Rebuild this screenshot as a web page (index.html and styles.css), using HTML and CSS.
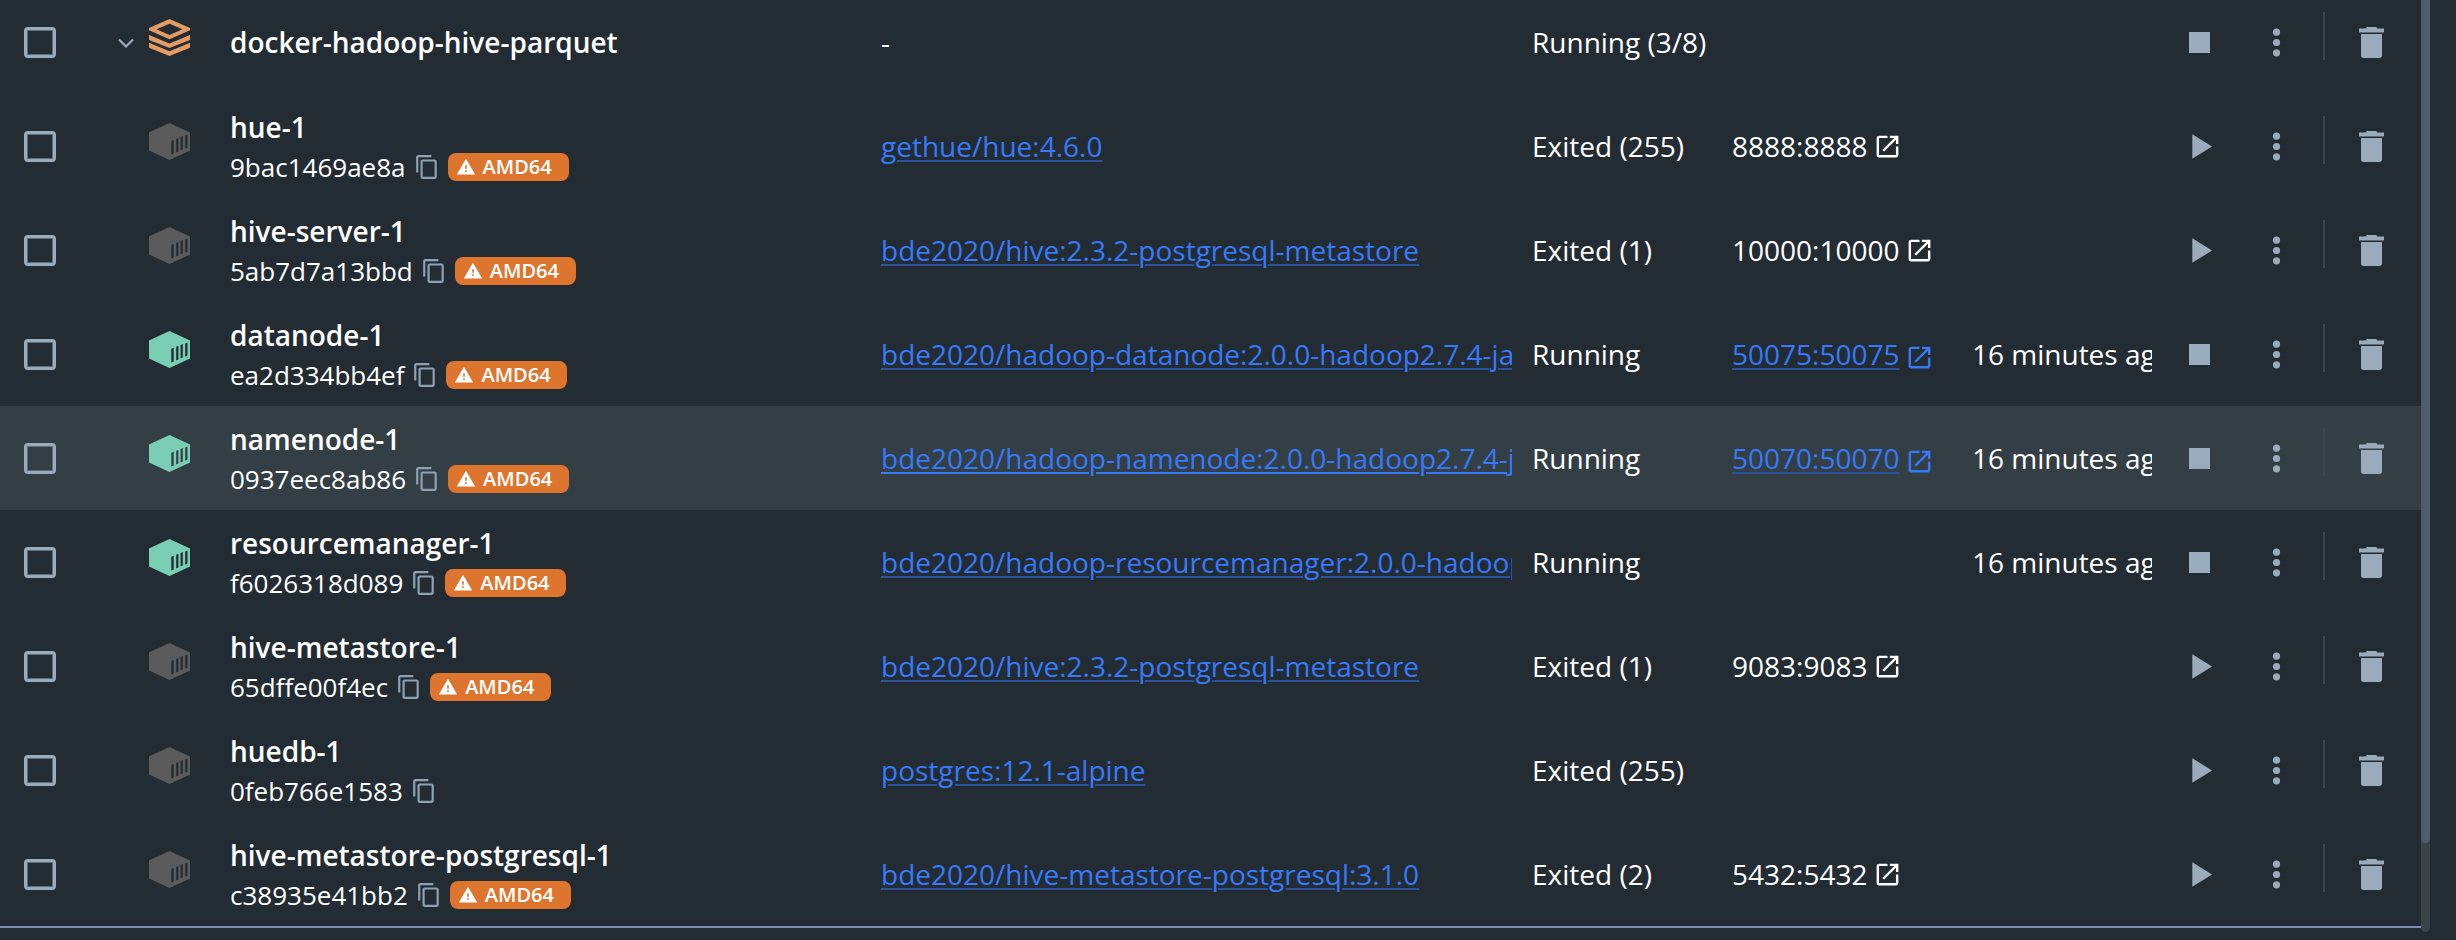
FILE: index.html
```html
<!DOCTYPE html>
<html lang="en">
<head>
<meta charset="utf-8">
<title>Containers</title>
<link rel="stylesheet" href="styles.css">
</head>
<body>
<svg class="defs" width="0" height="0" aria-hidden="true">
  <symbol id="i-chevron" viewBox="0 0 16 10"><path d="M1 1.500l7 7 7-7" fill="none" stroke="currentColor" stroke-width="2.200"/></symbol>
  <symbol id="i-stack" viewBox="0 0 41 37"><path fill="currentColor" fill-rule="evenodd" d="M20.500 0L41 9v2.300L20.500 20.300 0 11.300V9zM20.500 4.700L7.500 10.300l13 5.800 13-5.800zM0 16l20.500 8.500L41 16v5L20.500 29 0 21zM0 23.700l20.500 8.500L41 23.700v5L20.500 37 0 28.700z"/></symbol>
  <symbol id="i-box" viewBox="0 0 41 37"><path fill="currentColor" fill-rule="evenodd" d="M20.500 0L41 9.500v18L20.500 37 0 27.500v-18zM22.300 17.800v13.800l2.400-1V16.800zM27.200 15.800v13.600l2.200-1V14.900zM31.600 14v13.400l2.200-1V13zM36.200 12.400v13.400l2.300-1V11.500z"/></symbol>
  <symbol id="i-copy" viewBox="0 0 24 24"><path fill="currentColor" d="M16 1H4c-1.100 0-2 .9-2 2v14h2V3h12V1zm3 4H8c-1.100 0-2 .9-2 2v14c0 1.100.9 2 2 2h11c1.100 0 2-.9 2-2V7c0-1.100-.9-2-2-2zm0 16H8V7h11v14z"/></symbol>
  <symbol id="i-warn" viewBox="0 0 24 24"><path fill="currentColor" d="M1 21h22L12 2 1 21zm12-3h-2v-2h2v2zm0-4h-2v-4h2v4z"/></symbol>
  <symbol id="i-open" viewBox="0 0 24 24"><path fill="currentColor" d="M19 19H5V5h7V3H5c-1.110 0-2 .9-2 2v14c0 1.100.89 2 2 2h14c1.100 0 2-.9 2-2v-7h-2v7zM14 3v2h3.590l-9.830 9.830 1.410 1.410L19 6.410V10h2V3h-7z"/></symbol>
  <symbol id="i-stop" viewBox="0 0 32 32"><path fill="currentColor" d="M7 6h21v21H7z"/></symbol>
  <symbol id="i-play" viewBox="0 0 32 32"><path fill="currentColor" d="M10.300 4.200v24.600L30 16.500z"/></symbol>
  <symbol id="i-more" viewBox="0 0 32 32"><g fill="currentColor"><circle cx="16.500" cy="6.200" r="3.600"/><circle cx="16.500" cy="16.500" r="3.600"/><circle cx="16.500" cy="26.800" r="3.600"/></g></symbol>
  <symbol id="i-trash" viewBox="0 0 32 32"><path fill="currentColor" d="M3 2.500h6.500L11 1h9l1.500 1.500H28v4H3zM5 8h21v21.500c0 1.500-1 2.500-2.500 2.500h-16C6 32 5 31 5 29.500z"/></symbol>
</svg>
<div class="panel">
  <main class="table" id="rows"></main>
  <div class="scrollbar"><div class="thumb"></div></div>
</div>
<script src="rows.js"></script>
</body>
</html>
```
FILE: styles.css
```css
* { box-sizing: border-box; }
body {
  margin: 0;
  height: 940px;
  overflow: hidden;
  background: #242c33;
  color: #fff;
  font: 28px/38px "Open Sans", sans-serif;
}
.defs { display: none; }
svg { display: block; flex: none; }
.panel { display: flex; width: 2430px; }
.table {
  width: 2421px;
  height: 928px;
  overflow: hidden;
  border-bottom: 2px solid #7e90ae;
}
.row {
  display: grid;
  grid-template-columns: 80px 150px 651px 651px 200px 240px 210px 239px;
  height: 104px;
  align-items: center;
  white-space: nowrap;
}
.row:first-child { margin-top: -10px; }
.hover { background: #343f45; }
.check {
  width: 32px;
  height: 31px;
  margin: 1px 0 0 24px;
  border: 3px solid #9aabbc;
  border-radius: 4px;
  box-shadow: inset 0 0 0 1px #5f6d7a;
}
.kind { display: flex; align-items: center; padding-left: 69px; padding-bottom: 9px; }
.group .kind { padding-left: 38px; gap: 15px; }
.chevron { width: 16px; height: 10px; margin-top: 10px; color: #9aabbc; }
.stack { width: 41px; height: 37px; color: #e29c64; }
.box { width: 41px; height: 37px; color: #5b5b5b; }
.running .box { color: #79ceb3; }
.title { padding-top: 3px; }
.group .title { padding-top: 0; }
.name { font-weight: 600; }
.sub { display: flex; align-items: center; height: 42px; font-size: 26px; }
.copy { width: 26px; height: 26px; margin-left: 8px; color: #8fa1b5; }
.badge {
  display: flex;
  align-items: center;
  width: 121px;
  height: 28px;
  margin-left: 8px;
  padding-left: 8px;
  gap: 7px;
  border-radius: 8px;
  background: #dd752e;
  font-size: 20px;
  font-weight: 600;
}
.badge svg { width: 20px; height: 20px; }
.image { width: 631px; overflow: hidden; }
.link { color: #367afa; text-decoration: underline; text-decoration-color: #2b519b; text-decoration-thickness: 2px; text-underline-offset: 3px; }
.hover .image .link { text-decoration-color: #367afa; }
.port { display: flex; align-items: center; gap: 6px; }
.port svg { width: 29px; height: 29px; }
.port .link + svg { color: #367afa; margin-top: 7px; }
.started { width: 180px; overflow: hidden; }
.actions { display: flex; align-items: center; color: #9aabbc; }
.actions svg { width: 32px; height: 32px; }
.actions .more { margin-left: 46px; }
.divider { width: 2px; height: 48px; margin: 0 0 12px 31px; background: #3d444a; }
.actions .trash { margin-left: 31px; }
.scrollbar { width: 9px; height: 932px; background: #3b4248; border-radius: 0 0 5px 5px; }
.thumb { height: 843px; background: #4c5d6e; border-radius: 0 0 5px 5px; }
```
FILE: rows.js
```js
const rows = [
  { group: true, name: "docker-hadoop-hive-parquet", status: "Running (3/8)", on: true },
  { name: "hue-1", id: "9bac1469ae8a", amd: true, image: "gethue/hue:4.6.0", status: "Exited (255)", port: "8888:8888" },
  { name: "hive-server-1", id: "5ab7d7a13bbd", amd: true, image: "bde2020/hive:2.3.2-postgresql-metastore", status: "Exited (1)", port: "10000:10000" },
  { name: "datanode-1", id: "ea2d334bb4ef", amd: true, image: "bde2020/hadoop-datanode:2.0.0-hadoop2.7.4-java8", status: "Running", port: "50075:50075", on: true },
  { name: "namenode-1", id: "0937eec8ab86", amd: true, image: "bde2020/hadoop-namenode:2.0.0-hadoop2.7.4-java8", status: "Running", port: "50070:50070", on: true, hover: true },
  { name: "resourcemanager-1", id: "f6026318d089", amd: true, image: "bde2020/hadoop-resourcemanager:2.0.0-hadoop2.7.4-java8", status: "Running", on: true },
  { name: "hive-metastore-1", id: "65dffe00f4ec", amd: true, image: "bde2020/hive:2.3.2-postgresql-metastore", status: "Exited (1)", port: "9083:9083" },
  { name: "huedb-1", id: "0feb766e1583", image: "postgres:12.1-alpine", status: "Exited (255)" },
  { name: "hive-metastore-postgresql-1", id: "c38935e41bb2", amd: true, image: "bde2020/hive-metastore-postgresql:3.1.0", status: "Exited (2)", port: "5432:5432" }
];
const icon = (name, cls = "") => `<svg class="${cls}"><use href="#i-${name}"/></svg>`;
document.getElementById("rows").innerHTML = rows.map(r => `
<div class="row ${r.group ? "group" : ""} ${r.on ? "running" : ""} ${r.hover ? "hover" : ""}">
  <div class="check"></div>
  <div class="kind">${r.group ? icon("chevron", "chevron") + icon("stack", "stack") : icon("box", "box")}</div>
  <div class="title"><div class="name">${r.name}</div>${r.id ? `<div class="sub"><span>${r.id}</span>${icon("copy", "copy")}${r.amd ? `<span class="badge">${icon("warn")}<span>AMD64</span></span>` : ""}</div>` : ""}</div>
  <div class="image">${r.image ? `<span class="link">${r.image}</span>` : "-"}</div>
  <div class="status">${r.status}</div>
  <div class="port">${r.port ? `<span class="${r.on ? "link" : ""}">${r.port}</span>${icon("open")}` : ""}</div>
  <div class="started">${r.on && !r.group ? "16 minutes ago" : ""}</div>
  <div class="actions">${icon(r.on ? "stop" : "play")}${icon("more", "more")}<span class="divider"></span>${icon("trash", "trash")}</div>
</div>`).join("");
```
